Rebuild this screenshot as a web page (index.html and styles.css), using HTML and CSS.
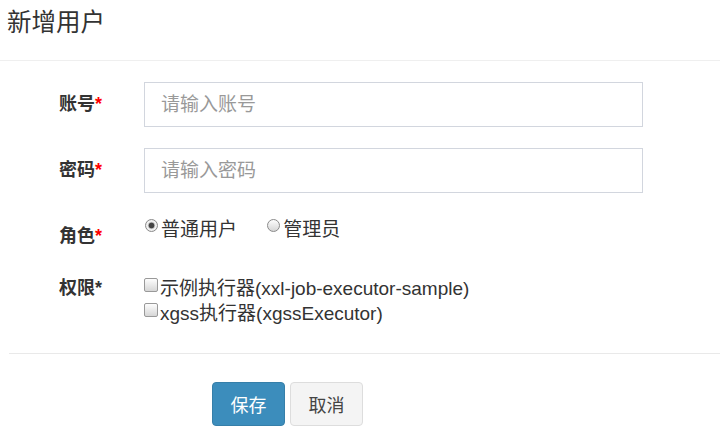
FILE: index.html
```html
<!DOCTYPE html>
<html lang="zh-CN">
<head>
    <meta charset="UTF-8">
    <meta name="viewport" content="width=device-width, initial-scale=1.0">
    <title>新增用户</title>
    <link rel="stylesheet" href="styles.css">
</head>
<body>

    <div class="modal">
        <div class="modal-header">
            <h4 class="modal-title">新增用户</h4>
        </div>

        <form class="modal-body">
            <!-- 账号 -->
            <div class="form-row row-input">
                <label class="form-label">账号<span class="req">*</span></label>
                <input type="text" class="form-control" placeholder="请输入账号">
            </div>

            <!-- 密码 -->
            <div class="form-row row-input">
                <label class="form-label">密码<span class="req">*</span></label>
                <input type="text" class="form-control" placeholder="请输入密码">
            </div>

            <!-- 角色 -->
            <div class="form-row row-radio">
                <label class="form-label label-offset">角色<span class="req">*</span></label>
                <div class="radio-group">
                    <label class="radio"><input type="radio" name="role" checked>普通用户</label>
                    <label class="radio"><input type="radio" name="role">管理员</label>
                </div>
            </div>

            <!-- 权限 -->
            <div class="form-row row-check">
                <label class="form-label">权限*</label>
                <div class="check-list">
                    <label class="check"><input type="checkbox">示例执行器(xxl-job-executor-sample)</label>
                    <label class="check"><input type="checkbox">xgss执行器(xgssExecutor)</label>
                </div>
            </div>
        </form>

        <div class="modal-footer">
            <button type="button" class="btn btn-primary">保存</button>
            <button type="button" class="btn btn-default">取消</button>
        </div>
    </div>

</body>
</html>
```

FILE: styles.css
```css
body {
    margin: 0;
    background-color: #fff;
    color: #333;
    font-family: "Liberation Sans", Arial, "Noto Sans CJK SC", sans-serif;
    font-size: 19px;
    line-height: 25px;
}
.modal {
    width: 720px;
}
.modal-header {
    box-sizing: border-box;
    height: 61px;
    padding: 9px 8px 0 7px;
    border-bottom: 1px solid #efefef;
}
.modal-title {
    margin: 0;
    font-size: 24.5px;
    line-height: 28px;
    font-weight: normal;
}
.modal-body {
    margin: 0;
    padding: 21px 0 27.5px 59px;
}
.form-row {
    display: grid;
    grid-template-columns: 85px 499px;
    align-items: start;
}
.row-input {
    align-items: center;
    margin-bottom: 21px;
}
.row-input + .row-input {
    margin-bottom: 24px;
}
.row-radio {
    margin-bottom: 27px;
}
.form-label {
    font-size: 18px;
    font-weight: bold;
}
.label-offset {
    padding-top: 6.5px;
}
.req {
    color: #f00;
}
.form-control {
    box-sizing: border-box;
    width: 499px;
    height: 45px;
    margin: 0;
    padding: 0 16px;
    border: 1px solid #d2d6de;
    border-radius: 0;
    font-family: inherit;
    font-size: 19px;
    color: #555;
    outline: none;
}
.form-control::placeholder {
    color: #999;
}
.radio {
    margin-right: 24px;
}
.radio input,
.check input {
    appearance: none;
    -webkit-appearance: none;
    display: inline-block;
    box-sizing: border-box;
    width: 13px;
    height: 13px;
    margin: 0 3px 0 1px;
    border: 1px solid #8a8a8a;
    background: linear-gradient(#fdfdfd, #d6d6d6);
    vertical-align: 4px;
}
.radio input {
    border-radius: 50%;
}
.radio input:checked {
    background: radial-gradient(circle, #444 0, #444 2.5px, #c0c0c0 3.2px, #f4f4f4 4.2px, #dcdcdc 100%);
}
.check input {
    width: 14px;
    height: 14px;
    margin: 0 2px 0 0;
    border-radius: 2px;
    border-color: #999;
    vertical-align: 3px;
}
.check {
    display: block;
}
.modal-footer {
    margin-left: 9px;
    padding: 28px 0 0 203px;
    border-top: 1px solid #e9e9e9;
    display: flex;
    gap: 5px;
}
.btn {
    box-sizing: border-box;
    width: 73px;
    height: 44px;
    padding: 0;
    border-radius: 4px;
    font-family: inherit;
    font-size: 18px;
    cursor: pointer;
}
.btn-primary {
    background-color: #3c8dbc;
    border: 1px solid #367fa9;
    color: #fff;
}
.btn-default {
    background-color: #f4f4f4;
    border: 1px solid #ddd;
    color: #444;
}
```
